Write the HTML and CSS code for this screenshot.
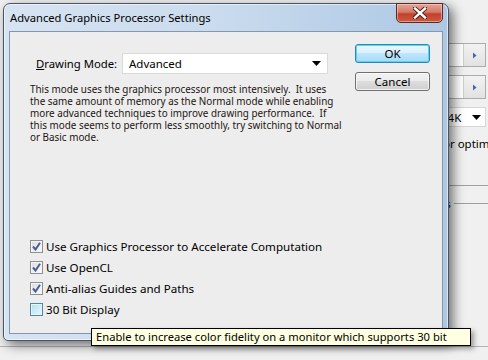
FILE: index.html
```html
<!DOCTYPE html>
<html lang="en">
<head>
  <meta charset="UTF-8" />
  <title>Advanced Graphics Processor Settings</title>
  <link rel="stylesheet" href="styles.css">
</head>
<body>
  <div class="desk">
    <!-- preferences panel behind the dialog -->
    <div class="behind">
      <div class="spin">
        <span class="spin-field"></span>
        <span class="spin-btn"><svg width="5" height="7" viewBox="0 0 5 7"><path d="M1 0.5 L4.5 3.5 L1 6.5 Z" fill="#4a63a8"/></svg></span>
      </div>
      <div class="spin">
        <span class="spin-field"></span>
        <span class="spin-btn"><svg width="5" height="7" viewBox="0 0 5 7"><path d="M1 0.5 L4.5 3.5 L1 6.5 Z" fill="#4a63a8"/></svg></span>
      </div>
      <div class="combo">
        <span>64K</span>
        <svg width="9" height="5" viewBox="0 0 9 5"><path d="M0 0 H9 L4.5 5 Z" fill="#000"/></svg>
      </div>
      <p class="hint">for optimum</p>
      <div class="rule"></div>
      <div class="group"><span>Options</span><i></i></div>
    </div>
    <div class="bottom-rule"></div>

    <div class="window">
      <div class="titlebar">
        <span class="title">Advanced Graphics Processor Settings</span>
        <span class="close">
          <svg width="14" height="12" viewBox="0 0 14 12">
            <path d="M2 1.5 L12 10.5 M12 1.5 L2 10.5" stroke="#3b1a16" stroke-width="4.2" stroke-linecap="square"/>
            <path d="M2 1.5 L12 10.5 M12 1.5 L2 10.5" stroke="#fff" stroke-width="2.4" stroke-linecap="square"/>
          </svg>
        </span>
      </div>

      <div class="client">
        <div class="main">
          <div class="mode-row">
            <label class="mode-label"><u>D</u>rawing Mode:</label>
            <div class="select">
              <span>Advanced</span>
              <svg width="9" height="5" viewBox="0 0 9 5"><path d="M0 0 H9 L4.5 5 Z" fill="#000"/></svg>
            </div>
          </div>
          <p class="desc">This mode uses the graphics processor most intensively.  It uses
the same amount of memory as the Normal mode while enabling
more advanced techniques to improve drawing performance.  If
this mode seems to perform less smoothly, try switching to Normal
or Basic mode.</p>

          <div class="checks">
            <label class="check"><span class="box on"><svg width="9" height="9" viewBox="0 0 9 9"><path d="M1 4.5 L3.5 7.5 L8 0.8" fill="none" stroke="#4b5f95" stroke-width="2"/></svg></span>Use Graphics Processor to Accelerate Computation</label>
            <label class="check"><span class="box on"><svg width="9" height="9" viewBox="0 0 9 9"><path d="M1 4.5 L3.5 7.5 L8 0.8" fill="none" stroke="#4b5f95" stroke-width="2"/></svg></span>Use OpenCL</label>
            <label class="check"><span class="box on"><svg width="9" height="9" viewBox="0 0 9 9"><path d="M1 4.5 L3.5 7.5 L8 0.8" fill="none" stroke="#4b5f95" stroke-width="2"/></svg></span>Anti-alias Guides and Paths</label>
            <label class="check"><span class="box hover"></span>30 Bit Display</label>
          </div>
        </div>

        <div class="buttons">
          <button class="btn default">OK</button>
          <button class="btn">Cancel</button>
        </div>
      </div>
    </div>

    <div class="tooltip">Enable to increase color fidelity on a monitor which supports 30 bit</div>
  </div>
</body>
</html>
```

FILE: styles.css
```css
* {
  box-sizing: border-box;
  margin: 0;
  padding: 0;
}

body {
  width: 488px;
  height: 360px;
  overflow: hidden;
  background-color: #f0f0f0;
  font-family: "Noto Sans", "Open Sans", sans-serif;
  color: #000;
}

.desk {
  position: relative;
  width: 488px;
  height: 360px;
  overflow: hidden;
}

/* panel behind */
.behind {
  margin-left: 440px;
  padding-top: 43px;
  width: 46px;
  font-size: 11.5px;
}

.spin {
  display: flex;
  height: 24px;
  margin-bottom: 8px;
  border: 1px solid #acacac;
  background-color: #fff;
}

.spin-field {
  flex: 1;
}

.spin-btn {
  width: 22px;
  border-left: 1px solid #cfcfcf;
  background: linear-gradient(#f2f2f2, #e2e2e2);
  display: flex;
  align-items: center;
  justify-content: center;
}

.combo {
  display: flex;
  align-items: center;
  justify-content: space-between;
  height: 20px;
  padding: 0 4px 0 0;
  background-color: #fff;
  border: 1px solid #d6d6d6;
}

.hint {
  margin-top: 9px;
  margin-left: -1px;
  white-space: nowrap;
}

.rule {
  margin-top: 34px;
  border-top: 1px solid #a0a0a0;
  width: 60px;
}

.group {
  display: flex;
  align-items: center;
  margin-top: 10px;
  margin-left: -32px;
  width: 90px;
}

.group i {
  flex: 1;
  margin-left: 3px;
  border-top: 1px solid #a0a0a0;
}

.bottom-rule {
  position: absolute;
  left: 0;
  right: 0;
  top: 346px;
  border-top: 1px solid #b4b4b4;
}

/* dialog window */
.window {
  position: absolute;
  left: 3px;
  top: 3px;
  width: 446px;
  height: 338px;
  display: flex;
  flex-direction: column;
  border: 1px solid #4a5566;
  border-radius: 7px 7px 5px 5px;
  background: linear-gradient(to right, #d6e3f2 0%, #cbdcee 45%, #b8cfe8 80%, #aec7e3 100%);
  box-shadow: 4px 4px 12px rgba(0, 0, 0, 0.55), inset 0 0 0 1px rgba(255, 255, 255, 0.55);
}

.titlebar {
  position: relative;
  height: 27px;
  flex-shrink: 0;
  display: flex;
  align-items: center;
  padding-left: 6px;
}

.title {
  font-size: 11.2px;
  color: #000;
}

.close {
  position: absolute;
  right: 5px;
  top: -1px;
  width: 47px;
  height: 20px;
  display: flex;
  align-items: center;
  justify-content: center;
  border: 1px solid #5b2a25;
  border-radius: 0 0 5px 5px;
  background: linear-gradient(#e6a597 0%, #d47a69 45%, #c2412d 55%, #cc5a3f 100%);
  box-shadow: inset 0 0 0 1px rgba(255, 220, 210, 0.5);
}

.client {
  flex: 1;
  display: flex;
  margin: 0 5px 6px 5px;
  padding: 12px 12px 13px 20px;
  background-color: #ededed;
  border: 1px solid #8797ab;
}

.main {
  flex: 1;
  display: flex;
  flex-direction: column;
  padding-top: 9px;
}

.mode-row {
  display: flex;
  align-items: center;
  height: 21px;
}

.mode-label {
  width: 92px;
  padding-left: 6px;
  font-size: 11.3px;
  white-space: nowrap;
}

.select {
  width: 206px;
  height: 21px;
  display: flex;
  align-items: center;
  justify-content: space-between;
  padding: 0 6px 0 6px;
  background-color: #fff;
  border: 1px solid #dadada;
  font-size: 11.5px;
}

.desc {
  margin-top: 9px;
  white-space: pre;
  font-size: 9.9px;
  line-height: 12px;
  color: #1c1410;
}

.checks {
  margin-top: auto;
  display: flex;
  flex-direction: column;
}

.check {
  display: flex;
  align-items: center;
  height: 21px;
  font-size: 11.6px;
  white-space: nowrap;
}

.box {
  width: 13px;
  height: 13px;
  margin-right: 3px;
  display: flex;
  align-items: center;
  justify-content: center;
  border: 1px solid #8e8f8f;
  background: linear-gradient(135deg, #dcdcdc, #fbfbfb);
  box-shadow: inset 0 0 0 1px #f4f4f4;
}

.box.hover {
  border-color: #5586a3;
  background: linear-gradient(135deg, #b1dff5, #e9f7fe);
  box-shadow: inset 0 0 0 1px #def9fa;
}

.buttons {
  display: flex;
  flex-direction: column;
  gap: 9px;
  width: 75px;
}

.btn {
  height: 19px;
  font-family: inherit;
  font-size: 11.5px;
  color: #000;
  border: 1px solid #707070;
  border-radius: 3px;
  background: linear-gradient(#f2f2f2 0%, #ebebeb 50%, #dddddd 50%, #cfcfcf 100%);
  box-shadow: inset 0 0 0 1px rgba(255, 255, 255, 0.7);
  line-height: 16px;
}

.btn.default {
  border-color: #3c7fb1;
  background: linear-gradient(#eaf6fd 0%, #d9f0fc 50%, #bee6fd 50%, #a7d9f5 100%);
  box-shadow: inset 0 0 0 1px #48dbfb;
}

/* tooltip */
.tooltip {
  position: absolute;
  left: 91px;
  top: 328px;
  width: 380px;
  height: 18px;
  padding-left: 4px;
  background-color: #ffffe1;
  border: 1px solid #000;
  font-size: 11.2px;
  line-height: 16px;
  white-space: nowrap;
  box-shadow: 3px 3px 5px rgba(0, 0, 0, 0.35);
}
```
